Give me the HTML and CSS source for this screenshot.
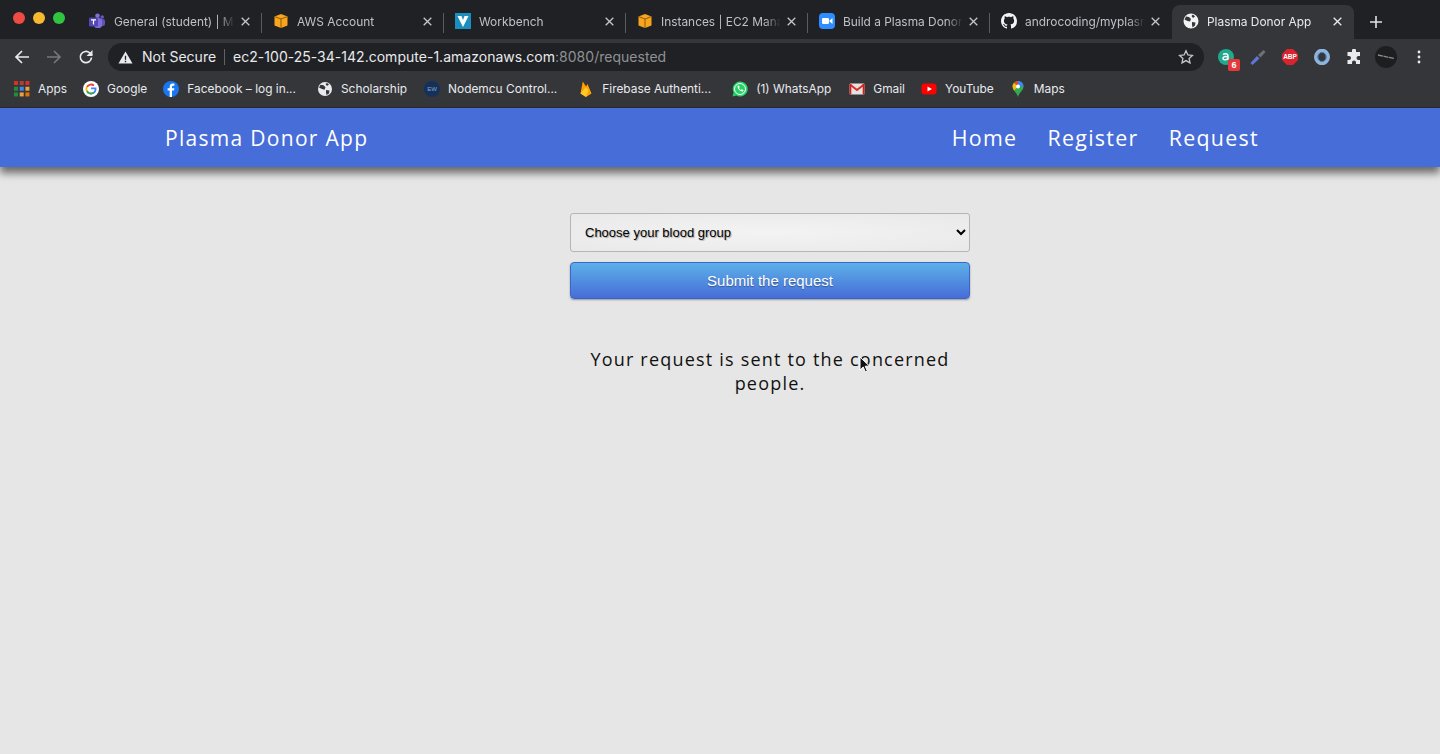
FILE: index.html
```html
<!DOCTYPE html>
<html lang="en">
<head>
<meta charset="utf-8">
<title>Plasma Donor App</title>
<link rel="stylesheet" href="styles.css">
</head>
<body>
<svg class="sprites" aria-hidden="true"><symbol id="x" viewBox="0 0 9 9"><path d="M.7.700l7.600 7.600M8.300.700L.7 8.300" stroke="currentColor" stroke-width="1.300" fill="none"/></symbol></svg>
<header class="browser">
  <div class="tabstrip">
    <div class="lights"><i class="light red"></i><i class="light yellow"></i><i class="light green"></i></div>
    <div class="tab sep first">
      <svg class="fav" viewBox="0 0 16 16"><circle cx="8.500" cy="2.800" r="2.300" fill="#7f6fd8"/><circle cx="13.200" cy="4" r="1.700" fill="#6a5bc4"/><rect x="9" y="6" width="7" height="7" rx="2" fill="#5f52b8"/><rect x="5" y="5" width="8" height="10" rx="3" fill="#7f6fd8"/><rect x="0" y="4.500" width="9" height="9" rx="1.300" fill="#5248b5"/><path d="M2 6.800h5M4.500 6.800v4.700" stroke="#fff" stroke-width="1.200"/></svg>
      <span class="title">General (student) | M</span><svg class="close"><use href="#x"/></svg>
    </div>
    <div class="tab sep">
      <svg class="fav" viewBox="0 0 16 16"><path d="M8 1l6.500 2.500v9L8 15l-6.500-2.500v-9z" fill="#f8a51d"/><path d="M1.500 3.500L8 6l6.500-2.500M8 6v9" stroke="#8a5a0c" stroke-width="1" fill="none"/></svg>
      <span class="title">AWS Account</span><svg class="close"><use href="#x"/></svg>
    </div>
    <div class="tab sep">
      <svg class="fav" viewBox="0 0 16 16"><rect width="16" height="16" fill="#1a8fbf"/><path d="M2.500 3h4L8 7l1.500-4h4L8 14z" fill="#fff"/></svg>
      <span class="title">Workbench</span><svg class="close"><use href="#x"/></svg>
    </div>
    <div class="tab sep">
      <svg class="fav" viewBox="0 0 16 16"><path d="M8 1l6.500 2.500v9L8 15l-6.500-2.500v-9z" fill="#f8a51d"/><path d="M1.500 3.500L8 6l6.500-2.500M8 6v9" stroke="#8a5a0c" stroke-width="1" fill="none"/></svg>
      <span class="title">Instances | EC2 Mana</span><svg class="close"><use href="#x"/></svg>
    </div>
    <div class="tab sep">
      <svg class="fav" viewBox="0 0 16 16"><rect width="16" height="16" rx="4" fill="#2d8cff"/><rect x="3" y="5" width="7" height="6" rx="1.300" fill="#fff"/><path d="M10.500 7.500L13.500 5v6l-3-2.500z" fill="#fff"/></svg>
      <span class="title">Build a Plasma Donor</span><svg class="close"><use href="#x"/></svg>
    </div>
    <div class="tab">
      <svg class="fav" viewBox="0 0 16 16"><path fill="#f1f3f4" d="M8 0C3.580 0 0 3.580 0 8c0 3.540 2.290 6.530 5.470 7.590.4.070.55-.17.55-.38 0-.19-.01-.82-.01-1.490-2.010.37-2.530-.49-2.690-.94-.09-.23-.48-.94-.82-1.130-.28-.15-.68-.52-.01-.53.63-.01 1.080.58 1.230.82.720 1.210 1.870.87 2.330.66.070-.52.280-.87.510-1.070-1.780-.2-3.640-.89-3.640-3.950 0-.87.310-1.590.820-2.150-.08-.2-.36-1.020.08-2.120 0 0 .67-.21 2.200.82.640-.18 1.320-.27 2-.27s1.360.09 2 .27c1.530-1.040 2.200-.82 2.200-.82.440 1.100.160 1.920.080 2.120.510.560.820 1.270.820 2.150 0 3.070-1.870 3.750-3.650 3.950.290.250.540.730.540 1.480 0 1.070-.01 1.930-.01 2.200 0 .210.150.460.550.380A8.010 8.010 0 0 0 16 8c0-4.420-3.580-8-8-8z"/></svg>
      <span class="title">androcoding/myplasm</span><svg class="close"><use href="#x"/></svg>
    </div>
    <div class="tab active">
      <svg class="fav" viewBox="0 0 16 16"><circle cx="8" cy="8" r="7.500" fill="#f1f3f4"/><path d="M3 3.500l3 .5 2 2-1 2.500L4.500 8 1.500 6.500zM9 9l3.500 .5-.5 3-2.500 2-.5-3zM10 1.500l2 2-2 1.500-1.500-2z" fill="#35363a"/></svg>
      <span class="title">Plasma Donor App</span><svg class="close"><use href="#x"/></svg>
    </div>
    <svg class="plus" viewBox="0 0 12 12"><path d="M6 0v12M0 6h12" stroke="#dee1e6" stroke-width="1.600"/></svg>
  </div>
  <div class="toolbar">
    <svg class="nav" viewBox="0 0 16 16"><path d="M15 8H2M8 2L2 8l6 6" stroke="#e8eaed" stroke-width="1.700" fill="none"/></svg>
    <svg class="nav" viewBox="0 0 16 16"><path d="M1 8h13M8 2l6 6-6 6" stroke="#74777b" stroke-width="1.700" fill="none"/></svg>
    <svg class="nav" viewBox="0 0 16 16"><path d="M13.500 8.500A5.600 5.600 0 1 1 11.800 4L14 6" stroke="#e8eaed" stroke-width="1.700" fill="none"/><path d="M14.500 1v6h-6z" fill="#e8eaed"/></svg>
    <div class="omnibox">
      <svg class="warn" viewBox="0 0 16 16"><path d="M8 1.500l7.500 13H.5z" fill="#e8eaed"/><path d="M8 6v4.500M8 11.500v1.500" stroke="#202124" stroke-width="1.400"/></svg>
      <span class="secure">Not Secure</span>
      <span class="url">ec2-100-25-34-142.compute-1.amazonaws.com<span class="url-dim">:8080/requested</span></span>
      <svg class="star" viewBox="0 0 16 16"><path d="M8 1.800l1.900 4.100 4.500.5-3.300 3 .9 4.500L8 11.600l-4 2.300.9-4.500-3.300-3 4.500-.5z" stroke="#c4c7c9" stroke-width="1.300" fill="none"/></svg>
    </div>
    <div class="extensions">
      <span class="ext"><svg class="ext-icon" viewBox="0 0 16 16"><circle cx="8" cy="8" r="8" fill="#1fa98f"/><path d="M5 5.500c2-1.500 5-1 5 1.500v4M10 8c-3-1-5 0-5 1.500S8 11.500 10 9.500" stroke="#fff" stroke-width="1.500" fill="none"/></svg><b class="badge">6</b></span>
      <span class="ext"><svg class="ext-icon" viewBox="0 0 16 16"><path d="M.5 14l6.500-7 2.500 2.500-7 6.500z" fill="#5d77d8"/><path d="M8 6l5.500-5 2 2-5 5.500z" fill="#6e7175"/></svg></span>
      <span class="ext"><svg class="ext-icon" viewBox="0 0 16 16"><path d="M5 0h6l5 5v6l-5 5H5l-5-5V5z" fill="#d9232e"/><text x="8" y="10.300" class="abp">ABP</text></svg></span>
      <span class="ext"><svg class="ext-icon" viewBox="0 0 16 16"><ellipse cx="8" cy="8" rx="6.200" ry="6.500" fill="none" stroke="#8fb4dc" stroke-width="3.600"/><ellipse cx="8" cy="8" rx="4" ry="4.600" fill="none" stroke="#4d7fb5" stroke-width="1"/></svg></span>
      <span class="ext"><svg class="ext-icon" viewBox="0 0 16 16"><path d="M6 1.500a2 2 0 0 1 4 0V3h4v4h-1.500a2 2 0 0 0 0 4H14v4h-4v-1.500a2 2 0 0 0-4 0V15H1.500v-4H3a2 2 0 0 0 0-4H1.500V3H6z" fill="#e8eaed"/></svg></span>
      <span class="avatar"><svg viewBox="0 0 22 22"><circle cx="11" cy="11" r="11" fill="#1d1e20"/><path d="M3 9l16 3.500" stroke="#8a8c8e" stroke-width="1.300" stroke-dasharray="5 .6"/></svg></span>
    </div>
    <svg class="menu" viewBox="0 0 4 14"><circle cx="2" cy="2" r="1.400" fill="#e8eaed"/><circle cx="2" cy="7" r="1.400" fill="#e8eaed"/><circle cx="2" cy="12" r="1.400" fill="#e8eaed"/></svg>
  </div>
  <nav class="bookmarks">
    <a class="bm"><svg class="bm-icon" viewBox="0 0 14 14"><rect x="0" y="0" width="3.500" height="3.500" fill="#d93025"/><rect x="5" y="0" width="3.500" height="3.500" fill="#b0402f"/><rect x="10" y="0" width="3.500" height="3.500" fill="#d93025"/><rect x="0" y="5" width="3.500" height="3.500" fill="#1e8e3e"/><rect x="5" y="5" width="3.500" height="3.500" fill="#4285f4"/><rect x="10" y="5" width="3.500" height="3.500" fill="#e8a33d"/><rect x="0" y="10" width="3.500" height="3.500" fill="#1e8e3e"/><rect x="5" y="10" width="3.500" height="3.500" fill="#e8a33d"/><rect x="10" y="10" width="3.500" height="3.500" fill="#e37400"/></svg>Apps</a>
    <a class="bm"><svg class="bm-icon" viewBox="0 0 16 16"><circle cx="8" cy="8" r="8" fill="#fff"/><path d="M8 7.300h4.600c.3 3-1.800 5.200-4.600 5.200a4.500 4.500 0 0 1-1-.1" fill="none" stroke="#4285f4" stroke-width="1.800"/><path d="M4 6A4.500 4.500 0 0 1 11 4.600" fill="none" stroke="#ea4335" stroke-width="1.800"/><path d="M3.900 5.800a4.500 4.500 0 0 0 0 4.300" fill="none" stroke="#fbbc05" stroke-width="1.800"/><path d="M3.900 10a4.500 4.500 0 0 0 6.800 1.600" fill="none" stroke="#34a853" stroke-width="1.800"/></svg>Google</a>
    <a class="bm"><svg class="bm-icon" viewBox="0 0 16 16"><circle cx="8" cy="8" r="8" fill="#1877f2"/><path d="M9 16V9.500h2l.4-2.300H9V6c0-.8.300-1.200 1.200-1.200h1.200V2.700C11 2.600 10.400 2.500 9.800 2.500 7.900 2.500 6.700 3.700 6.700 5.700v1.500H4.600v2.300h2.100V16z" fill="#fff"/></svg>Facebook – log in...</a>
    <a class="bm after-clip"><svg class="bm-icon" viewBox="0 0 16 16"><circle cx="8" cy="8" r="7" fill="#e8eaed"/><path d="M3.500 3.700l3 .5 2 2-1 2.500L5 8 2 6.500zM9 9l3.500 .5-.5 3-2.500 1.500-.5-2.500zM10 2l2 1.500-2 1.500-1.500-2z" fill="#35363a"/></svg>Scholarship</a>
    <a class="bm nudge-1"><svg class="bm-icon" viewBox="0 0 16 16"><circle cx="8" cy="8" r="8" fill="#14315c"/><text x="8" y="10.300" class="ew">EW</text></svg>Nodemcu Control...</a>
    <a class="bm after-clip"><svg class="bm-icon" viewBox="0 0 16 16"><path d="M2.500 12.500L4.800.5 8 5.500l1.500-2.500 4 9.500L8 16z" fill="#ffa000"/><path d="M2.500 12.500L8 6l2.500 3.500L8 16z" fill="#ffca28"/></svg>Firebase Authenti...</a>
    <a class="bm after-clip"><svg class="bm-icon" viewBox="0 0 16 16"><path d="M.5 15.500l1.100-4A7.500 7.500 0 1 1 4.500 14.500z" fill="#25d366"/><circle cx="8" cy="8" r="5.500" fill="none" stroke="#fff" stroke-width="1"/><path d="M5.500 5c0 3 2.500 5.500 5.500 5.500l.5-1.500-1.800-.8-.7.700c-1-.4-1.700-1.200-2-2l.7-.700L7 4.500z" fill="#fff"/></svg>(1) WhatsApp</a>
    <a class="bm nudge-2"><svg class="bm-icon" viewBox="0 0 16 16"><rect x=".5" y="2.500" width="15" height="11" rx="1" fill="#e6e2e2"/><path d="M1 3.500L8 9l7-5.500" fill="none" stroke="#d93025" stroke-width="2"/><rect x=".5" y="3" width="1.800" height="10.500" fill="#c5221f"/><rect x="13.700" y="3" width="1.800" height="10.500" fill="#c5221f"/></svg>Gmail</a>
    <a class="bm"><svg class="bm-icon" viewBox="0 0 16 16"><rect x=".5" y="2.500" width="15" height="11" rx="3" fill="#f00"/><path d="M6.500 5.500v5L11 8z" fill="#fff"/></svg>YouTube</a>
    <a class="bm"><svg class="bm-icon" viewBox="0 0 16 16"><path d="M8 0a5.500 5.500 0 0 1 5.500 5.500C13.500 9.500 9.500 11 8 16 6.500 11 2.500 9.500 2.500 5.500A5.500 5.500 0 0 1 8 0z" fill="#34a853"/><path d="M4 2a5.500 5.500 0 0 1 4-2v5.500z" fill="#ea4335"/><path d="M8 0a5.500 5.500 0 0 1 5.500 5.500H8z" fill="#4285f4"/><path d="M2.500 5.500A5.500 5.500 0 0 1 4 2l4 3.500L4 9.500z" fill="#fbbc05"/><circle cx="8" cy="5.500" r="2" fill="#fff"/></svg>Maps</a>
  </nav>
</header>

<div class="app-nav">
  <a class="brand">Plasma Donor App</a>
  <div class="links"><a>Home</a><a>Register</a><a>Request</a></div>
</div>

<main class="content">
  <form class="form">
    <select class="blood"><option>Choose your blood group</option></select>
    <button class="submit" type="button">Submit the request</button>
  </form>
  <p class="message">Your request is sent to the concerned people.</p>
</main>

<svg class="cursor" viewBox="0 0 11 18"><path d="M1 1v13l3.200-3 2.200 5 2-.9-2.200-4.900H10.500z" fill="#111" stroke="#fff" stroke-width="1"/></svg>
</body>
</html>
```

FILE: styles.css
```css
* { box-sizing: border-box; }
html, body { margin: 0; height: 100%; }
body {
  width: 1440px;
  height: 754px;
  overflow: hidden;
  position: relative;
  background: #e6e6e6;
  font-family: "Open Sans", sans-serif;
  display: flex;
  flex-direction: column;
}
.sprites { display: none; }
.browser {
  font-family: "Inter", "Liberation Sans", sans-serif;
  flex: none;
  height: 108px;
  background: #35363a;
  border-bottom: 1px solid #2a2b2e;
}
.tabstrip {
  height: 39px;
  background: #202124;
  display: flex;
  align-items: flex-end;
  padding-left: 80px;
  position: relative;
}
.lights {
  display: flex;
  gap: 8px;
  position: absolute;
  left: 13px;
  top: 12px;
}
.light { width: 12px; height: 12px; border-radius: 50%; }
.red { background: #ee4b45; }
.yellow { background: #f7b92e; }
.green { background: #2fc53f; }
.tab {
  width: 182px;
  height: 34px;
  display: flex;
  align-items: center;
  padding: 0 12px 2px 11px;
  color: #bdc1c6;
  font-size: 11.900px;
  position: relative;
  flex: none;
}
.tab.first { padding-left: 9px; }
.tab.first .fav { margin-right: 9px; }
.tab.sep::after {
  content: "";
  position: absolute;
  right: 0;
  top: 8px;
  height: 20px;
  width: 1px;
  background: #5a5c60;
}
.tab.active {
  background: #35363a;
  border-radius: 8px 8px 0 0;
  color: #e8eaed;
}
.fav { width: 16px; height: 16px; flex: none; margin-right: 8px; }
.title {
  flex: 1;
  min-width: 0;
  white-space: nowrap;
  -webkit-mask-image: linear-gradient(to right, #000 86%, transparent 100%);
  mask-image: linear-gradient(to right, #000 86%, transparent 100%);
}
.close {
  flex: none;
  width: 9px;
  height: 9px;
  margin: 1px 0 0 6px;
  color: #c4c7c9;
}
.active .close { color: #e8eaed; }
.plus { width: 12px; height: 12px; flex: none; margin: 0 0 11px 16px; }

.toolbar {
  height: 32px;
  display: flex;
  align-items: flex-end;
  padding: 0 0 0 14px;
  position: relative;
}
.nav { width: 16px; height: 16px; flex: none; margin: 0 16px 6px 0; }
.nav:nth-child(3) { margin-right: 14px; }
.omnibox {
  width: 1096px;
  height: 28px;
  background: #202124;
  border-radius: 14px;
  display: flex;
  align-items: center;
  padding: 0 10px;
  font-size: 14px;
  flex: none;
  color: #e8eaed;
}
.warn { width: 15px; height: 15px; flex: none; margin-right: 9px; }
.secure {
  padding-right: 8px;
  margin-right: 8px;
  border-right: 1px solid #5f6368;
  line-height: 16px;
}
.url { flex: 1; white-space: nowrap; line-height: 16px; letter-spacing: .02px; }
.url-dim { color: #8f9295; }
.star { width: 16px; height: 16px; flex: none; }
.extensions {
  display: flex;
  align-items: center;
  gap: 16px;
  margin-left: 14px;
  height: 28px;
}
.ext { position: relative; width: 16px; height: 16px; display: block; }
.ext-icon { width: 16px; height: 16px; display: block; }
.badge {
  position: absolute;
  left: 10px;
  top: 10px;
  width: 12px;
  height: 12px;
  background: #e5383b;
  color: #fff;
  border-radius: 2px;
  font: 700 9px/12px "Liberation Sans", sans-serif;
  text-align: center;
}
.abp { font: 700 6.500px "Liberation Sans", sans-serif; fill: #fff; text-anchor: middle; }
.ew { font: 400 6px "Liberation Sans", sans-serif; fill: #8fa6c8; text-anchor: middle; }
.avatar { width: 22px; height: 22px; display: block; margin-left: -3px; }
.avatar svg { display: block; }
.menu { width: 4px; height: 14px; flex: none; margin: 0 0 7px 20px; }

.bookmarks {
  height: 36px;
  display: flex;
  align-items: center;
  padding: 0 0 2px 14px;
  gap: 16px;
  font-size: 11.900px;
  color: #e8eaed;
}
.bm { display: flex; align-items: center; white-space: nowrap; }
.after-clip { margin-left: 5px; }
.nudge-1 { margin-left: 1px; }
.nudge-2 { margin-left: 2px; }
.bm-icon { width: 16px; height: 16px; margin: 2px 8px 0 0; flex: none; }

.app-nav {
  flex: none;
  height: 59px;
  background: #476dd8;
  box-shadow: 0 6px 8px rgba(0, 0, 0, .55);
  color: #fff;
  display: flex;
  align-items: center;
  justify-content: space-between;
  padding: 0 181px 0 165px;
  letter-spacing: 1.300px;
  font-size: 21px;
  position: relative;
}
.links { display: flex; gap: 30px; font-size: 21.400px; }
.content {
  flex: 1;
  display: flex;
  flex-direction: column;
  align-items: center;
  padding: 46px 0 0 100px;
}
.form { width: 400px; display: flex; flex-direction: column; gap: 10px; }
.blood {
  width: 100%;
  height: 39px;
  padding: 0 10px;
  border: 1px solid #b5b5b5;
  border-radius: 3px;
  background: radial-gradient(ellipse at center, #f3f3f3, #e9e9e9);
  color: #000;
  font: 13px "Liberation Sans", sans-serif;
  text-shadow: 1px 1px 1px rgba(0, 0, 0, .3);
}
.submit {
  height: 37px;
  border: 1px solid #3a66c8;
  border-radius: 4px;
  background: linear-gradient(#5cb0e8, #476dd8);
  box-shadow: 0 1px 2px rgba(0, 0, 0, .35);
  color: #fff;
  font: 15px "Liberation Sans", sans-serif;
  text-shadow: 0 1px 1px rgba(0, 0, 0, .35);
}
.message {
  width: 400px;
  margin: 48px 0 0;
  text-align: center;
  font-size: 18px;
  line-height: 24px;
  letter-spacing: 1.200px;
  color: #111;
}
.cursor {
  position: absolute;
  left: 859px;
  top: 356px;
  width: 11px;
  height: 18px;
}
```
